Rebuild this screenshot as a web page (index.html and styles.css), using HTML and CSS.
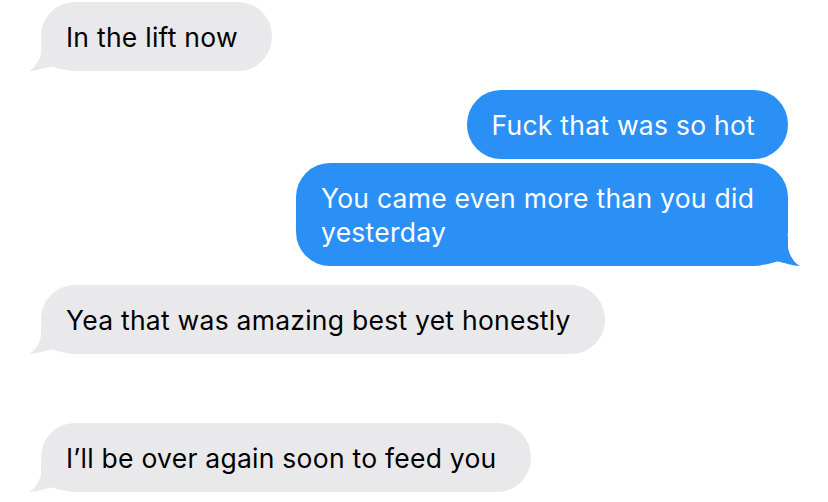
FILE: index.html
```html
<!DOCTYPE html>
<html lang="en">
<head>
<meta charset="utf-8">
<title>Messages</title>
<link rel="stylesheet" href="styles.css">
</head>
<body>
<main class="thread">
  <div class="bubble received tail first">In the lift now
    <svg class="tail-svg" viewBox="0 0 40 30" aria-hidden="true"><path d="M12 0 L36 0 L36 28.5 C30 28.5 26 25.5 22 25.5 C16 26.5 8 30 0 30 C4 28 10 22 12 12 Z"/></svg>
  </div>
  <div class="bubble sent gap">Fuck that was so hot</div>
  <div class="bubble sent tail wide group">You came even more than you did yesterday
    <svg class="tail-svg" viewBox="0 0 40 30" aria-hidden="true"><path d="M12 0 L36 0 L36 28.5 C30 28.5 26 25.5 22 25.5 C16 26.5 8 30 0 30 C4 28 10 22 12 12 Z"/></svg>
  </div>
  <div class="bubble received tail gap">Yea that was amazing best yet honestly
    <svg class="tail-svg" viewBox="0 0 40 30" aria-hidden="true"><path d="M12 0 L36 0 L36 28.5 C30 28.5 26 25.5 22 25.5 C16 26.5 8 30 0 30 C4 28 10 22 12 12 Z"/></svg>
  </div>
  <div class="bubble received tail gap-large">I’ll be over again soon to feed you
    <svg class="tail-svg" viewBox="0 0 40 30" aria-hidden="true"><path d="M12 0 L36 0 L36 28.5 C30 28.5 26 25.5 22 25.5 C16 26.5 8 30 0 30 C4 28 10 22 12 12 Z"/></svg>
  </div>
</main>
</body>
</html>
```
FILE: styles.css
```css
html, body {
  margin: 0;
  padding: 0;
  background: #ffffff;
}

body {
  width: 828px;
  height: 502px;
  overflow: hidden;
  font-family: "Inter", "Liberation Sans", sans-serif;
  -webkit-font-smoothing: antialiased;
}

.thread {
  display: flex;
  flex-direction: column;
  padding: 2px 40px 0 41px;
}

.bubble {
  position: relative;
  box-sizing: border-box;
  font-size: 26.5px;
  line-height: 34px;
  letter-spacing: 0.25px;
  padding: 18px 34px 17px 25px;
  border-radius: 34px;
  white-space: nowrap;
}

.wide {
  white-space: normal;
  width: 492px;
  padding-right: 22px;
}

.received {
  align-self: flex-start;
  background: #e9e9eb;
  color: #000000;
}

.sent {
  align-self: flex-end;
  background: #2b90f6;
  color: #ffffff;
}

.sent:not(.wide) {
  padding-right: 33px;
}

.gap { margin-top: 19px; }
.group { margin-top: 4px; }
.gap-large { margin-top: 69px; }

.tail-svg {
  position: absolute;
  bottom: 0;
  width: 40px;
  height: 30px;
  overflow: visible;
}

.received .tail-svg {
  left: -12px;
  fill: #e9e9eb;
}

.sent .tail-svg {
  right: -12px;
  fill: #2b90f6;
  transform: scaleX(-1);
}
```
